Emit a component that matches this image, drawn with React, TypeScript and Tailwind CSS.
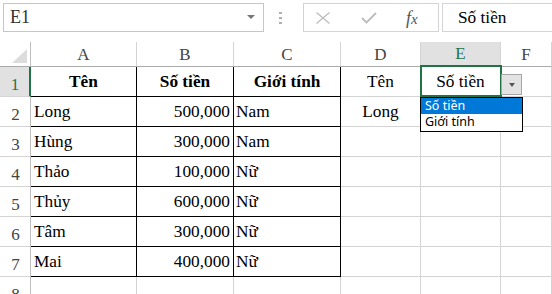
import React from "react";

const rows = [
  ["Long", "500,000", "Nam"],
  ["Hùng", "300,000", "Nam"],
  ["Thảo", "100,000", "Nữ"],
  ["Thủy", "600,000", "Nữ"],
  ["Tâm", "300,000", "Nữ"],
  ["Mai", "400,000", "Nữ"],
];

// Times-style serif for the sheet text
const serif = "font-['Liberation_Serif',serif]!";
const grid = `border-r border-b border-[#d4d4d4] ${serif}`;
const black = `border-r border-b border-black ${serif}`;

function ColHead({ label, active }: { label: string; active?: boolean }) {
  return (
    <div
      className={`flex items-end justify-center leading-[20px] text-[17px] border-r font-['Liberation_Serif',serif]! ${
        active
          ? "bg-[#e1e1e1] text-[#217346] border-b-2 border-b-[#217346] border-r-[#d4d4d4]"
          : "text-[#444] border-b border-b-[#ababab] border-r-[#d4d4d4]"
      }`}
    >
      <span className="pb-[1px] font-['Liberation_Serif',serif]!">{label}</span>
    </div>
  );
}

function RowHead({ n, active }: { n: number; active?: boolean }) {
  return (
    <div
      className={`flex items-end justify-center leading-[20px] text-[17px] border-b border-b-[#d4d4d4] ${
        active
          ? "bg-[#e1e1e1] text-[#217346] border-r-2 border-r-[#217346]"
          : "text-[#444] border-r border-r-[#bfbfbf]"
      }`}
    >
      <span className="pb-[1px] pl-[1px] font-['Liberation_Serif',serif]!">{n}</span>
    </div>
  );
}

export default function App() {
  return (
    <div className="w-[552px] h-[294px] overflow-hidden bg-white">
      {/* formula bar */}
      <div className="h-[42px] flex items-start pt-[3px]">
        <div className="ml-[3px] w-[261px] h-[29px] border border-[#c6c6c6] flex items-center pl-[6px] text-[18px] text-[#333] relative font-['Liberation_Serif',serif]!">
          E1
          <span className="absolute right-[8px] top-[11px] w-0 h-0 border-l-[4px] border-r-[4px] border-t-[4px] border-l-transparent border-r-transparent border-t-[#777]" />
        </div>
        <div className="ml-[15px] mt-[9px] flex flex-col gap-[3px]">
          <span className="w-[3px] h-[2px] bg-[#b0b0b0]" />
          <span className="w-[3px] h-[2px] bg-[#b0b0b0]" />
          <span className="w-[3px] h-[2px] bg-[#b0b0b0]" />
        </div>
        <div className="ml-[21px] w-[136px] h-[29px] border border-[#d4d4d4] flex items-center">
          <svg width="16" height="12" viewBox="0 0 16 12" className="ml-[11px]">
            <path d="M1.5 0.5 L14.5 11.5 M14.5 0.5 L1.5 11.5" stroke="#bcbcbc" strokeWidth="1.3" fill="none" />
          </svg>
          <svg width="16" height="12" viewBox="0 0 16 12" className="ml-[30px]">
            <path d="M1 6 L5.5 10.5 L15 1" stroke="#bcbcbc" strokeWidth="1.8" fill="none" />
          </svg>
          <span className="ml-[29px] italic text-[18px] text-[#555] leading-none font-['Liberation_Serif',serif]!">
            f<span className="text-[15px] font-['Liberation_Serif',serif]!">x</span>
          </span>
        </div>
        <div className="ml-[3px] flex-1 h-[29px] border border-r-0 border-[#d4d4d4] flex items-center pl-[15px] text-[17.3px] text-black font-['Liberation_Serif',serif]!">
          Số tiền
        </div>
      </div>

      {/* sheet */}
      <div className="grid grid-cols-[31px_106px_97px_107px_80px_80px_1fr] grid-rows-[25px_repeat(8,30px)] text-[17.3px] text-black">
        <div className="border-r border-b border-r-[#bfbfbf] border-b-[#ababab] flex items-end justify-end pr-[3px] pb-[3px]">
          <svg width="15" height="14" viewBox="0 0 15 14">
            <path d="M15 0 L15 14 L0 14 Z" fill="#dcdcdc" />
          </svg>
        </div>
        <ColHead label="A" />
        <ColHead label="B" />
        <ColHead label="C" />
        <ColHead label="D" />
        <ColHead label="E" active />
        <ColHead label="F" />

        {/* row 1 */}
        <RowHead n={1} active />
        <div className={`${black} font-bold text-center leading-[29px]`}>Tên</div>
        <div className={`${black} font-bold text-center leading-[29px]`}>Số tiền</div>
        <div className={`${black} font-bold text-center leading-[29px]`}>Giới tính</div>
        <div className={`${grid} text-center leading-[29px]`}>Tên</div>
        <div className={`${grid} text-center leading-[29px] relative`}>
          Số tiền
          <span className="absolute left-[-1px] top-[-2px] w-[82px] h-[32px] border-2 border-[#217346] z-10" />
          <span className="absolute left-[80px] top-[7px] w-[21px] h-[21px] bg-[#e3e3e3] border border-[#a6a6a6] z-20 flex items-center justify-center">
            <span className="w-0 h-0 border-l-[3.5px] border-r-[3.5px] border-t-[4px] border-l-transparent border-r-transparent border-t-[#555]" />
          </span>
          <div className="absolute left-[-1px] top-[30px] w-[103px] h-[35px] border border-black bg-white z-30 text-left text-[12.5px] leading-[16px]">
            <div className="bg-[#0078d7] text-white pl-[4px] h-[16px] font-['Noto_Sans',sans-serif]!">Số tiền</div>
            <div className="text-black pl-[4px] h-[16px] font-['Noto_Sans',sans-serif]!">Giới tính</div>
          </div>
        </div>
        <div className={grid} />

        {rows.map((r, i) => (
          <React.Fragment key={i}>
            <RowHead n={i + 2} />
            <div className={`${black} pl-[3px] leading-[29px]`}>{r[0]}</div>
            <div className={`${black} pr-[3px] text-right leading-[29px]`}>{r[1]}</div>
            <div className={`${black} pl-[2px] leading-[29px]`}>{r[2]}</div>
            <div className={`${grid} text-center leading-[29px]`}>{i === 0 ? "Long" : ""}</div>
            <div className={grid} />
            <div className={grid} />
          </React.Fragment>
        ))}

        <RowHead n={8} />
        <div className={grid} />
        <div className={grid} />
        <div className={grid} />
        <div className={grid} />
        <div className={grid} />
        <div className={grid} />
      </div>
    </div>
  );
}
